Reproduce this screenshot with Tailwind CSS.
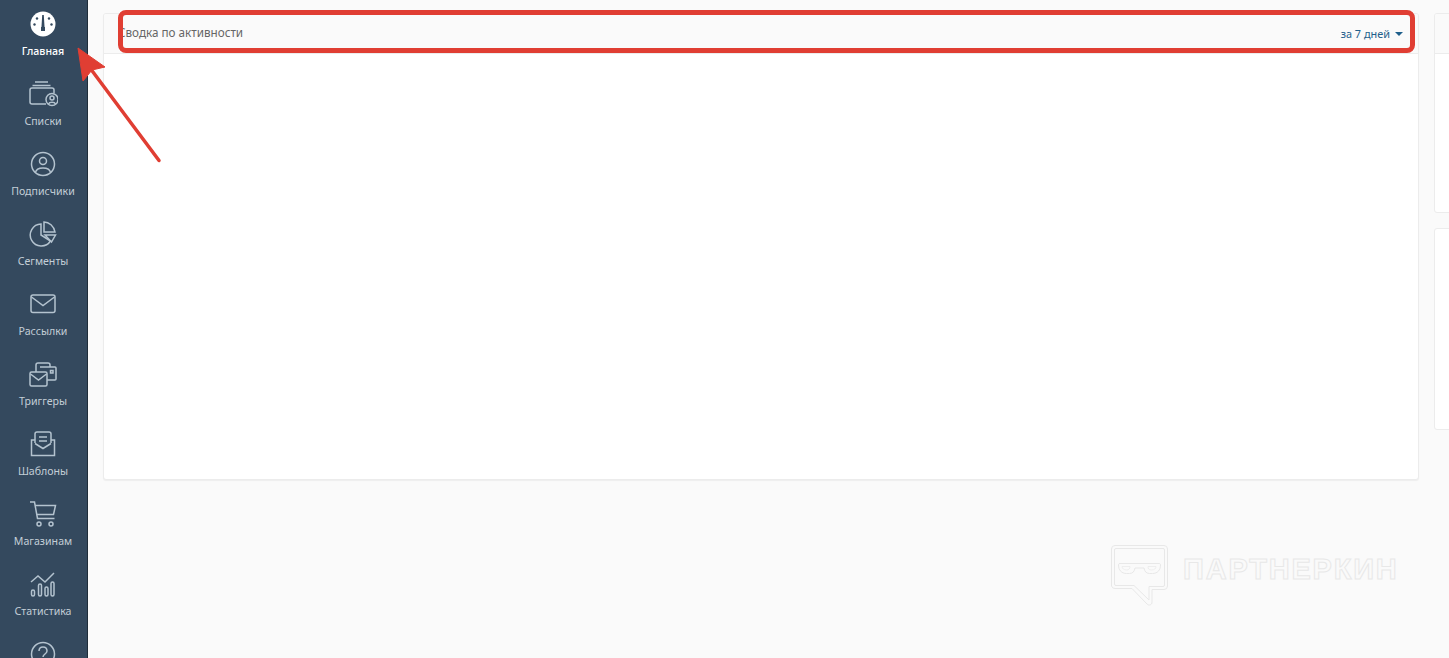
<!doctype html>
<html lang="ru">
    <head>
        <meta charset="UTF-8">
        <script src="https://cdn.jsdelivr.net/npm/@tailwindcss/browser@4"></script>
        <title>Главная</title>
    </head>

    <body class="font-['Noto_Sans','Open_Sans',sans-serif] overflow-hidden">
        <div class="relative flex h-[658px] w-[1449px] overflow-hidden bg-[#fafafa]">

            <!-- sidebar -->
            <nav class="h-full w-[88px] shrink-0 overflow-hidden border-r border-[#1f2d3a] bg-[#34495e] pr-[1px] text-[10.6px] leading-[14px] text-[#c3ced7]">
                <a class="flex h-[70px] flex-col items-center pt-[9px] font-medium text-white">
                    <svg class="h-[30px] w-[30px]" viewBox="0 0 30 30">
                        <circle cx="15" cy="15" r="12.5" fill="#fff"/>
                        <path d="M14.200 6h1.600l.7 11.500a1.600 1.600 0 1 1-3 0z" fill="#34495e"/>
                        <rect x="13" y="18" width="4" height="4" fill="#34495e"/>
                        <circle cx="9" cy="9.500" r="1.200" fill="#34495e"/>
                        <circle cx="21" cy="9.500" r="1.200" fill="#34495e"/>
                        <circle cx="6.500" cy="15.500" r="1.200" fill="#34495e"/>
                        <circle cx="23.500" cy="15.500" r="1.200" fill="#34495e"/>
                    </svg>
                    <span class="mt-[5px]">Главная</span>
                </a>
                <a class="flex h-[70px] flex-col items-center pt-[9px]">
                    <svg class="h-[30px] w-[30px] fill-none stroke-[#b4c3cf] stroke-[1.5]" viewBox="0 0 30 30">
                        <path d="M7 3h13M4.500 6.500h18"/>
                        <path d="M18 25H4a2 2 0 0 1-2-2V11a2 2 0 0 1 2-2h20a2 2 0 0 1 2 2v3"/>
                        <circle cx="24" cy="20.500" r="6"/>
                        <circle cx="24" cy="19" r="2"/>
                        <path d="M20.500 25c1-2.500 6-2.500 7 0"/>
                    </svg>
                    <span class="mt-[5px]">Списки</span>
                </a>
                <a class="flex h-[70px] flex-col items-center pt-[9px]">
                    <svg class="h-[30px] w-[30px] fill-none stroke-[#b4c3cf] stroke-[1.5]" viewBox="0 0 30 30">
                        <circle cx="15" cy="15" r="11.500"/>
                        <circle cx="15" cy="12" r="3.500"/>
                        <path d="M7.500 23.500c1-6 14-6 15 0"/>
                    </svg>
                    <span class="mt-[5px]">Подписчики</span>
                </a>
                <a class="flex h-[70px] flex-col items-center pt-[9px]">
                    <svg class="h-[30px] w-[30px] fill-none stroke-[#b4c3cf] stroke-[1.5]" viewBox="0 0 30 30">
                        <path d="M13 5a11 11 0 1 0 9.500 17L13 16z"/>
                        <path d="M16 3c5 0 10 4 11 10H16z"/>
                        <path d="M17 16h10.500l-4 7z"/>
                    </svg>
                    <span class="mt-[5px]">Сегменты</span>
                </a>
                <a class="flex h-[70px] flex-col items-center pt-[9px]">
                    <svg class="h-[30px] w-[30px] fill-none stroke-[#b4c3cf] stroke-[1.5]" viewBox="0 0 30 30">
                        <rect x="3" y="6" width="24" height="17.500" rx="2"/>
                        <path d="M3.500 8l11.500 8.500L26.500 8"/>
                    </svg>
                    <span class="mt-[5px]">Рассылки</span>
                </a>
                <a class="flex h-[70px] flex-col items-center pt-[9px]">
                    <svg class="h-[30px] w-[30px] fill-none stroke-[#b4c3cf] stroke-[1.5]" viewBox="0 0 30 30">
                        <rect x="2" y="13" width="17" height="14" rx="1.500"/>
                        <path d="M2.500 15l8 6 8-6"/>
                        <path d="M8 13V6a2 2 0 0 1 2-2h10a2 2 0 0 1 2 2v2"/>
                        <path d="M12 8h15a1 1 0 0 1 1 1v11a1 1 0 0 1-1 1h-8"/>
                        <rect x="22.500" y="11.500" width="2.500" height="2.500"/>
                    </svg>
                    <span class="mt-[5px]">Триггеры</span>
                </a>
                <a class="flex h-[70px] flex-col items-center pt-[9px]">
                    <svg class="h-[30px] w-[30px] fill-none stroke-[#b4c3cf] stroke-[1.5]" viewBox="0 0 30 30">
                        <path d="M7 14V5a2 2 0 0 1 2-2h12a2 2 0 0 1 2 2v9"/>
                        <path d="M11 8h8M11 12h8"/>
                        <path d="M7 14.500l8 5 8-5"/>
                        <path d="M7 11H3.500v15.500h23V11H23"/>
                    </svg>
                    <span class="mt-[5px]">Шаблоны</span>
                </a>
                <a class="flex h-[70px] flex-col items-center pt-[9px]">
                    <svg class="h-[30px] w-[30px] fill-none stroke-[#b4c3cf] stroke-[1.5]" viewBox="0 0 30 30">
                        <path d="M2 3h4.500l3 16.500h17"/>
                        <path d="M7 6.500h20.500l-2 9H8.500"/>
                        <circle cx="11" cy="25" r="2"/>
                        <circle cx="23" cy="25" r="2"/>
                    </svg>
                    <span class="mt-[5px]">Магазинам</span>
                </a>
                <a class="flex h-[70px] flex-col items-center pt-[9px]">
                    <svg class="h-[30px] w-[30px] fill-none stroke-[#b4c3cf] stroke-[1.5]" viewBox="0 0 30 30">
                        <path d="M3 13l7-6 7 6 9-9"/>
                        <rect x="3.500" y="21" width="3" height="6" rx="1.500"/>
                        <rect x="10.500" y="15" width="3" height="12" rx="1.500"/>
                        <rect x="17" y="18" width="3" height="9" rx="1.500"/>
                        <rect x="23" y="13" width="3" height="14" rx="1.500"/>
                    </svg>
                    <span class="mt-[5px]">Статистика</span>
                </a>
                <a class="flex h-[70px] flex-col items-center pt-[9px]">
                    <svg class="h-[30px] w-[30px] fill-none stroke-[#b4c3cf] stroke-[1.5]" viewBox="0 0 30 30">
                        <circle cx="15" cy="15" r="11.500"/>
                        <path d="M11 12c0-5.500 8-5.500 8 0 0 3-4 3-4 6"/>
                        <circle cx="15" cy="21.500" r=".6"/>
                    </svg>
                </a>
            </nav>

            <!-- content -->
            <main class="flex flex-1 items-start gap-[15px] pt-[13px] pl-[15px]">
                <section class="h-[467px] w-[1316px] shrink-0 overflow-hidden rounded-[3px] border border-[#ececec] bg-white shadow-[0_1px_1px_rgba(0,0,0,0.05)]">
                    <header class="flex h-[40px] items-center justify-between border-b border-[#ececec] bg-[#fafafa] pr-[15px] pl-[14px]">
                        <span class="mb-[2px] text-[11.7px] text-[#666]">Сводка по активности</span>
                        <span class="mt-[1px] flex items-center gap-[5px] text-[10.9px] text-[#1f5f8b]">за 7 дней<i class="mt-[1px] h-0 w-0 border-x-[4px] border-t-[4px] border-x-transparent border-t-[#1f5f8b]"></i></span>
                    </header>
                </section>
                <aside class="flex w-[40px] shrink-0 flex-col gap-[15px]">
                    <div class="h-[200px] w-[40px] overflow-hidden rounded-[3px] border border-[#ececec] bg-white">
                        <div class="h-[40px] border-b border-[#ececec] bg-[#fafafa]"></div>
                    </div>
                    <div class="h-[202px] w-[40px] rounded-[3px] border border-[#ececec] bg-white"></div>
                </aside>
            </main>

            <!-- watermark -->
            <div class="absolute top-[545px] left-[1111px] flex items-start gap-[15px]">
                <svg class="h-[61px] w-[57px] fill-none stroke-[#e8e8e8]" viewBox="0 0 57 61">
                    <path d="M4 .5h49a3.500 3.500 0 0 1 3.500 3.500v37a3.500 3.500 0 0 1-3.500 3.500H41V57c0 3-3 4-5 2L21 43.500H4A3.500 3.500 0 0 1 .5 41V4A3.500 3.500 0 0 1 4 .5z"/>
                    <path d="M5 3.500h47a1.500 1.500 0 0 1 1.500 1.500v35a1.500 1.500 0 0 1-1.500 1.500H38V55L23 40.500H5A1.500 1.500 0 0 1 3.500 39V5A1.500 1.500 0 0 1 5 3.500z"/>
                    <path d="M8 18.500h40c1 0 1.500.5 1.500 1.500 0 5-3 8.500-8 8.500h-3c-3 0-5-2-5.500-5.500h-9c-.5 3.500-2.500 5.500-5.500 5.500h-3c-5 0-8-3.500-8-8.500 0-1 .5-1.500 1.500-1.500z"/>
                    <path d="M11 21.500h8c0 2-1 3.500-3.500 3.500S11 23.500 11 21.500zM37 21.500h8c0 2-1.500 3.500-4.500 3.500S37 23.500 37 21.500z" stroke-width=".7"/>
                </svg>
                <span class="mt-[7px] text-[29px] leading-[34px] tracking-[1.8px] font-['Liberation_Sans',sans-serif] font-bold text-transparent [-webkit-text-stroke:1px_#e8e8e8]">ПАРТНЕРКИН</span>
            </div>

            <!-- annotations -->
            <div class="absolute top-[10px] left-[118px] h-[43px] w-[1297px] rounded-[8px] border-[5px] border-[#e03e33]"></div>
            <svg class="absolute top-[40px] left-[70px] h-[130px] w-[100px]" viewBox="0 0 100 130">
                <path d="M89 120.500L20 28" stroke="#e03e33" stroke-width="3.500" stroke-linecap="round" fill="none"/>
                <path d="M8 8l5 33 9-11 13-3z" fill="#e03e33" stroke="#e03e33" stroke-linejoin="round"/>
            </svg>
        </div>
    </body>
</html>
